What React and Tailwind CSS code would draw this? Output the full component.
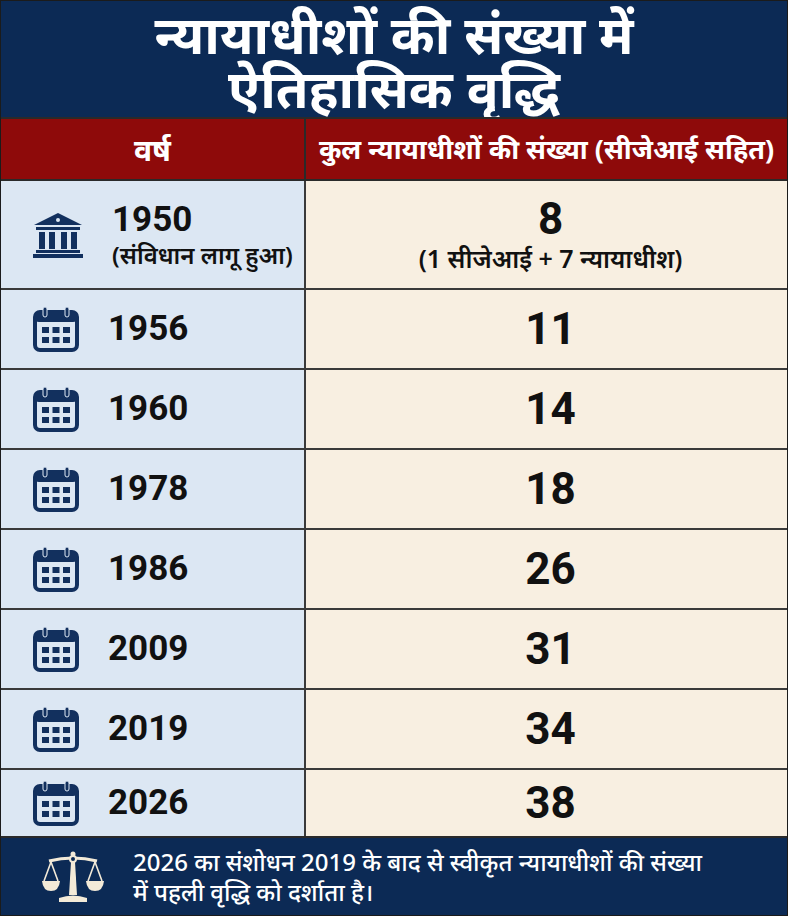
import React from "react";

const rows = [
  { year: "1950", note: "(संविधान लागू हुआ)", total: "8", sub: "(1 सीजेआई + 7 न्यायाधीश)", icon: "court" },
  { year: "1956", total: "11" },
  { year: "1960", total: "14" },
  { year: "1978", total: "18" },
  { year: "1986", total: "26" },
  { year: "2009", total: "31" },
  { year: "2019", total: "34" },
  { year: "2026", total: "38", last: true },
];

const digits = { fontFamily: 'Roboto, "Liberation Sans", sans-serif' };

function CourtIcon() {
  return (
    <svg width="52" height="46" viewBox="0 0 52 46" fill="#12305e">
      <path d="M26 1 L50 13 L2 13 Z" />
      <circle cx="26" cy="8" r="2" fill="#dce7f3" />
      <rect x="4" y="15" width="44" height="3" />
      <rect x="7" y="20" width="6" height="17" />
      <rect x="17" y="20" width="6" height="17" />
      <rect x="29" y="20" width="6" height="17" />
      <rect x="39" y="20" width="6" height="17" />
      <rect x="4" y="38" width="44" height="3" />
      <rect x="1" y="42" width="50" height="4" />
    </svg>
  );
}

function CalendarIcon() {
  return (
    <svg width="48" height="46" viewBox="0 0 48 46" fill="none">
      <rect x="3" y="6" width="42" height="38" rx="5" stroke="#12305e" strokeWidth="4" fill="#dce7f3" />
      <rect x="3" y="6" width="42" height="10" rx="4" fill="#12305e" />
      <rect x="11" y="1" width="4" height="10" rx="2" fill="#12305e" stroke="#dce7f3" strokeWidth="1" />
      <rect x="33" y="1" width="4" height="10" rx="2" fill="#12305e" stroke="#dce7f3" strokeWidth="1" />
      <g fill="#12305e">
        <rect x="10" y="21" width="7" height="6" />
        <rect x="20.5" y="21" width="7" height="6" />
        <rect x="31" y="21" width="7" height="6" />
        <rect x="10" y="31" width="7" height="6" />
        <rect x="20.5" y="31" width="7" height="6" />
        <rect x="31" y="31" width="7" height="6" />
      </g>
    </svg>
  );
}

function ScalesIcon() {
  return (
    <svg width="62" height="52" viewBox="0 0 62 52" fill="#f3ead8" stroke="#f3ead8">
      <circle cx="31" cy="3" r="2.5" stroke="none" />
      <path d="M7 10 Q31 4 55 10" strokeWidth="3" fill="none" />
      <circle cx="31" cy="8" r="3" fill="#0c2a55" strokeWidth="2" />
      <path d="M29 11 L33 11 L35 44 L27 44 Z" stroke="none" />
      <path d="M17 47 Q31 42 45 47 L45 51 L17 51 Z" stroke="none" />
      <path d="M9 11 L2 30 M9 11 L16 30 M53 11 L46 30 M53 11 L60 30" strokeWidth="1.6" fill="none" />
      <path d="M0 30 L18 30 Q17 40 9 40 Q1 40 0 30 Z" stroke="none" />
      <path d="M44 30 L62 30 Q61 40 53 40 Q45 40 44 30 Z" stroke="none" />
    </svg>
  );
}

export default function App() {
  return (
    <div
      className="flex h-[916px] w-[788px] flex-col overflow-hidden border border-[#1b1b1b] bg-[#0c2a55]"
      style={{ fontFamily: '"Noto Sans", "Liberation Sans", sans-serif' }}
    >
      {/* Title */}

      <div className="flex h-[116px] flex-col items-center justify-center bg-[#0c2a55] pt-[4px] text-white">
        <h1 className="text-[53px] font-bold leading-[54px]">न्यायाधीशों की संख्या में</h1>
        <h1 className="text-[53px] font-bold leading-[54px]">ऐतिहासिक वृद्धि</h1>
      </div>

      {/* Column heads */}

      <div className="grid h-[64px] grid-cols-[305px_1fr] border-y-2 border-[#2a2a2a] bg-[#8e0a0a] text-white">
        <div className="flex items-center justify-center border-r-2 border-[#2a2a2a] text-[30px] font-bold">
          वर्ष
        </div>
        <div className="flex items-center justify-center text-[27px] font-bold">
          कुल न्यायाधीशों की संख्या (सीजेआई सहित)
        </div>
      </div>

      {/* Rows */}

      {rows.map((r) => (
        <div
          key={r.year}
          className={
            r.icon
              ? "grid h-[109px] grid-cols-[305px_1fr] border-b-2 border-[#3a3a3a]"
              : r.last
              ? "grid h-[68px] grid-cols-[305px_1fr] border-b-2 border-[#2a2a2a]"
              : "grid h-[80px] grid-cols-[305px_1fr] border-b-2 border-[#3a3a3a]"
          }
        >
          <div className="flex items-center gap-[28px] border-r-2 border-[#3a3a3a] bg-[#dce7f3] pl-[31px]">
            {r.icon ? <CourtIcon /> : <CalendarIcon />}
            <div className="flex flex-col">
              <span className="text-[35px] font-bold leading-[40px] text-[#111]" style={digits}>
                {r.year}
              </span>
              {r.note && (
                <span className="text-[24px] font-semibold leading-[30px] text-[#111]">{r.note}</span>
              )}
            </div>
          </div>
          <div className="flex flex-col items-center justify-center bg-[#f8efe1] pl-[8px] text-[#111]">
            <span className="text-[44px] font-bold leading-[46px]" style={digits}>
              {r.total}
            </span>
            {r.sub && <span className="text-[25px] font-semibold leading-[32px]">{r.sub}</span>}
          </div>
        </div>
      ))}

      {/* Footer note */}

      <div className="flex flex-1 items-center gap-[29px] bg-[#0c2a55] pl-[41px]">
        <ScalesIcon />
        <p className="text-[24px] font-medium leading-[30px] text-white">
          2026 का संशोधन 2019 के बाद से स्वीकृत न्यायाधीशों की संख्या
          <br />
          में पहली वृद्धि को दर्शाता है।
        </p>
      </div>
    </div>
  );
}
